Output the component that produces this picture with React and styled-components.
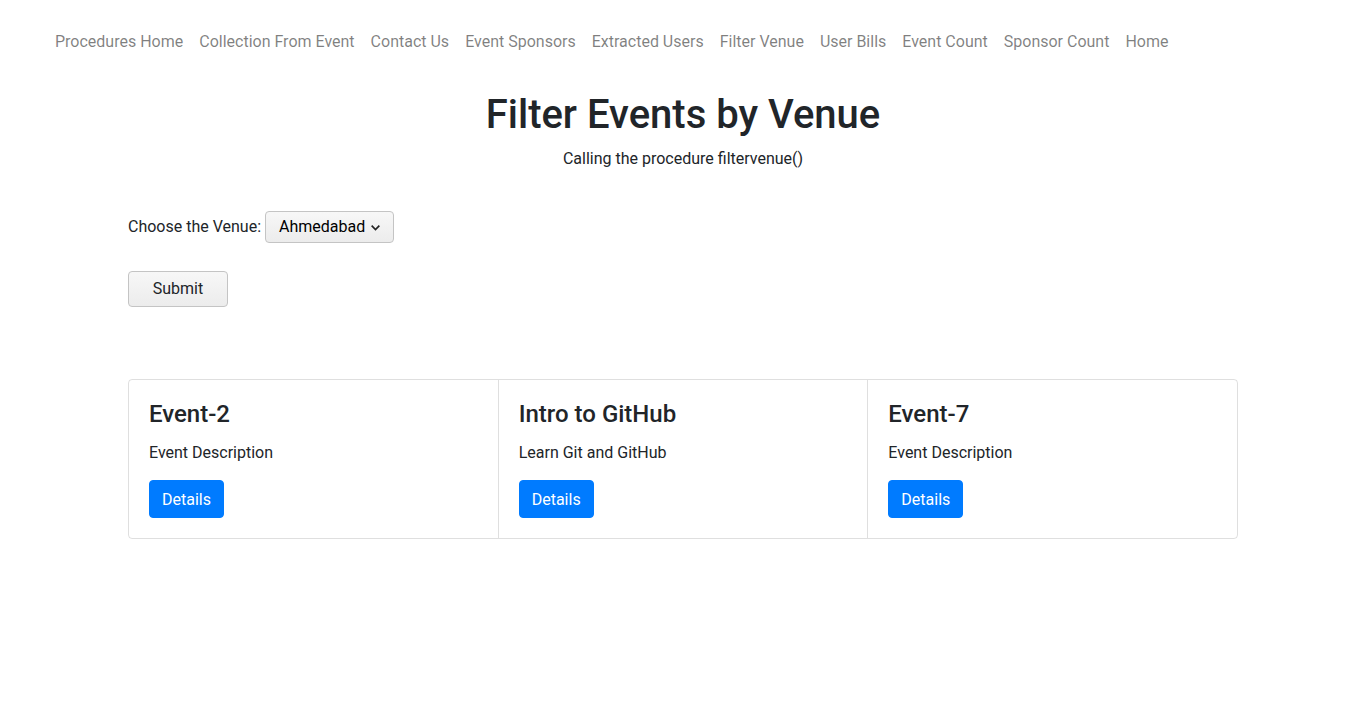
import React from "react";
import styled, { createGlobalStyle } from "styled-components";

const Global = createGlobalStyle`
  html, body { margin: 0; padding: 0; background: #fff; }
  body {
    font-family: Roboto, "Noto Sans", "Liberation Sans", sans-serif;
    font-size: 16px;
    line-height: 1.5;
    color: #212529;
  }
  * { box-sizing: border-box; }
`;

const NavBar = styled.nav`
  display: flex;
  padding: 30px 0 0 47px;
  height: 65px;
`;

const NavLink = styled.a`
  padding: 0 8px;
  color: rgba(0, 0, 0, 0.5);
  text-decoration: none;
  font-size: 16px;
  line-height: 24px;
  cursor: pointer;
`;

const Container = styled.div`
  width: 1110px;
  margin: 0 auto;
`;

const Title = styled.h1`
  margin: 26px 0 0;
  text-align: center;
  font-size: 40px;
  font-weight: 500;
  line-height: 48px;
`;

const Subtitle = styled.p`
  margin: 8px 0 0;
  text-align: center;
  font-size: 16px;
  line-height: 24px;
`;

const Form = styled.form`
  margin-top: 40px;
  display: flex;
  flex-direction: column;
  align-items: flex-start;
`;

const FieldRow = styled.div`
  display: flex;
  align-items: center;
  gap: 4px;
`;

const Label = styled.label`
  font-size: 16px;
  line-height: 24px;
`;

const SelectBox = styled.div`
  display: flex;
  align-items: center;
  gap: 5px;
  height: 32px;
  padding: 0 12px 0 13px;
  border: 1px solid #c4c4c4;
  border-radius: 4px;
  background: linear-gradient(#f7f7f7, #ececec);
  font-size: 16px;
  color: #000;
`;

const SubmitButton = styled.button`
  margin-top: 28px;
  width: 100px;
  height: 36px;
  padding: 0 0 1px;
  border: 1px solid #c4c4c4;
  border-radius: 4px;
  background: linear-gradient(#f7f7f7, #ececec);
  font-family: inherit;
  font-size: 16px;
  color: #212529;
`;

const CardGroup = styled.div`
  margin-top: 72px;
  display: flex;
  border: 1px solid rgba(0, 0, 0, 0.125);
  border-radius: 4px;
`;

const Card = styled.div`
  flex: 1 1 0;
  padding: 20px;
  border-left: ${(p) => (p.first ? "none" : "1px solid rgba(0,0,0,0.125)")};
`;

const CardTitle = styled.h4`
  margin: 0 0 12px;
  font-size: 24px;
  font-weight: 500;
  line-height: 29px;
`;

const CardText = styled.p`
  margin: 0 0 15px;
  font-size: 16px;
  line-height: 24px;
`;

const DetailsButton = styled.button`
  display: block;
  height: 38px;
  padding: 0 12px;
  border: 1px solid #007bff;
  border-radius: 4px;
  background: #007bff;
  color: #fff;
  font-family: inherit;
  font-size: 16px;
`;

const links = [
  "Procedures Home",
  "Collection From Event",
  "Contact Us",
  "Event Sponsors",
  "Extracted Users",
  "Filter Venue",
  "User Bills",
  "Event Count",
  "Sponsor Count",
  "Home",
];

const events = [
  { title: "Event-2", desc: "Event Description" },
  { title: "Intro to GitHub", desc: "Learn Git and GitHub" },
  { title: "Event-7", desc: "Event Description" },
];

export default function App() {
  return (
    <>
      <Global />
      <NavBar>
        {links.map((l) => (
          <NavLink key={l}>{l}</NavLink>
        ))}
      </NavBar>
      <Container>
        <Title>Filter Events by Venue</Title>
        <Subtitle>Calling the procedure filtervenue()</Subtitle>
        <Form onSubmit={(e) => e.preventDefault()}>
          <FieldRow>
            <Label>Choose the Venue:</Label>
            <SelectBox>
              Ahmedabad
              <svg width="11" height="11" viewBox="0 0 10 10">
                <path d="M1.5 3.3 L5 6.8 L8.5 3.3" fill="none" stroke="#222" strokeWidth="1.5" />
              </svg>
            </SelectBox>
          </FieldRow>
          <SubmitButton type="submit">Submit</SubmitButton>
        </Form>
        <CardGroup>
          {events.map((e, i) => (
            <Card key={i} first={i === 0}>
              <CardTitle>{e.title}</CardTitle>
              <CardText>{e.desc}</CardText>
              <DetailsButton>Details</DetailsButton>
            </Card>
          ))}
        </CardGroup>
      </Container>
    </>
  );
}
